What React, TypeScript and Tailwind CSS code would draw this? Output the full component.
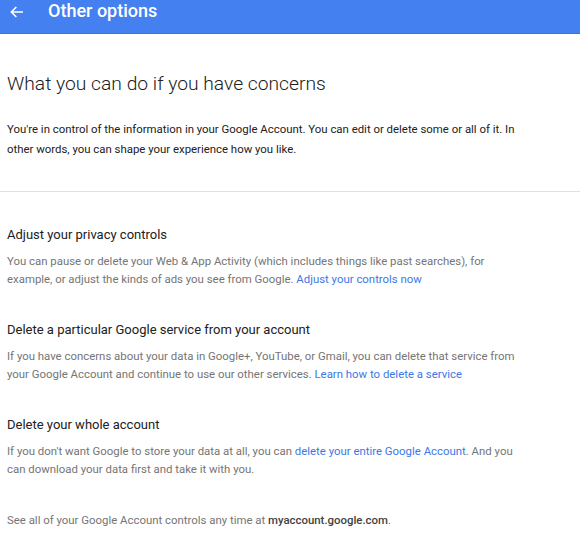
export default function App() {
  return (
    <div className="h-[544px] w-[580px] overflow-hidden bg-white font-['Roboto',sans-serif]">
      <header className="flex h-[34px] items-start border-b border-[#2f74f0] bg-[#4480f0] text-white">
        <svg className="ml-[9px] mt-[4px] h-[16px] w-[16px]" viewBox="0 0 24 24" fill="none" stroke="currentColor" strokeWidth="2.4">
          <path d="M21 12H4M11 4.5L3.5 12l7.5 7.5" />
        </svg>
        <h1 className="ml-[23px] mt-[2px] text-[18px] font-medium leading-none">Other options</h1>
      </header>

      <div className="w-[536px] px-[7px]">
        <h2 className="mt-[36px] text-[19.25px] font-light leading-[28px] text-[#212121]">
          What you can do if you have concerns
        </h2>
        <p className="mt-[21px] text-[11.4px] leading-[20px] text-[#212121]">
          You're in control of the information in your Google Account. You can edit or delete some or all of it. In
          other words, you can shape your experience how you like.
        </p>
      </div>

      <div className="mt-[32px] border-t border-[#e0e0e0]" />

      <div className="w-[536px] px-[7px]">
        <Section title="Adjust your privacy controls" first>
          You can pause or delete your Web &amp; App Activity (which includes things like past searches), for
          example, or adjust the kinds of ads you see from Google.{" "}
          <a className="text-[#3b78e7]">Adjust your controls now</a>
        </Section>
        <Section title="Delete a particular Google service from your account">
          If you have concerns about your data in Google+, YouTube, or Gmail, you can delete that service from
          your Google Account and continue to use our other services.{" "}
          <a className="text-[#3b78e7]">Learn how to delete a service</a>
        </Section>
        <Section title="Delete your whole account">
          If you don't want Google to store your data at all, you can{" "}
          <a className="text-[#3b78e7]">delete your entire Google Account</a>. And you can download your data
          first and take it with you.
        </Section>
        <p className="mt-[33px] text-[11.4px] leading-[18px] text-[#757575]">
          See all of your Google Account controls any time at{" "}
          <span className="font-medium text-[#424242]">myaccount.google.com</span>.
        </p>
      </div>
    </div>
  );
}

function Section({ title, first, children }: { title: string; first?: boolean; children: React.ReactNode }) {
  return (
    <section className={first ? "mt-[33px]" : "mt-[32px]"}>
      <h3 className="text-[13px] leading-[20px] text-[#212121]">{title}</h3>
      <p className="mt-[7px] text-[11.4px] leading-[18px] text-[#757575]">{children}</p>
    </section>
  );
}
